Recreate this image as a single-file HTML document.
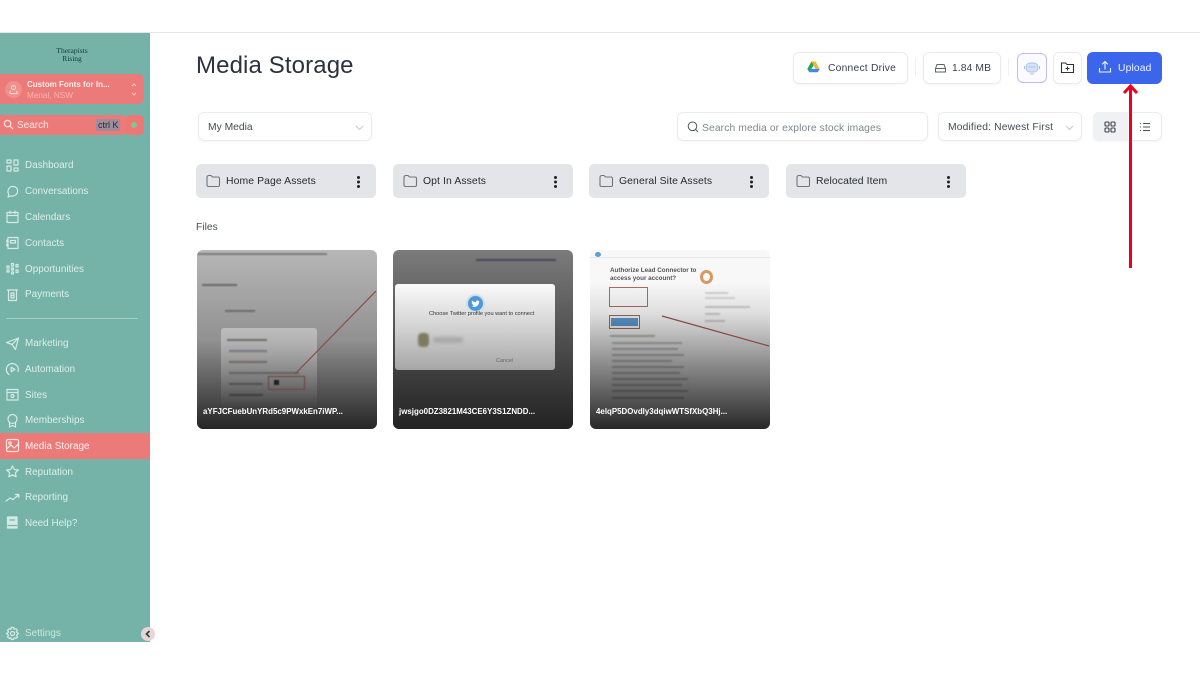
<!DOCTYPE html>
<html><head><meta charset="utf-8">
<style>
html,body{margin:0;padding:0;background:#fff}
body{width:1200px;height:675px;position:relative;overflow:hidden;font-family:"Liberation Sans",sans-serif}
body>*{filter:blur(.35px)}
.a{position:absolute}
.t{position:absolute;white-space:nowrap;line-height:14px;margin-top:1px}
.nav{position:absolute;left:25px;font-size:9.900px;line-height:14px;margin-top:1px;color:#dceee9;white-space:nowrap;letter-spacing:.02px}
.ic{position:absolute;left:5px;width:15px;height:15px;fill:none;stroke:#d6eae5;stroke-width:1.200;stroke-linecap:round;stroke-linejoin:round}
.btn{position:absolute;background:#fff;border:1px solid #e9ebee;border-radius:6px;box-sizing:border-box;box-shadow:0 1px 2px rgba(16,24,40,.04)}
.folder{position:absolute;top:164px;width:179.500px;height:34px;background:#e3e5e8;border-radius:5px}
.folder span{position:absolute;left:30px;top:11px;font-size:10.400px;line-height:14px;color:#262b33;white-space:nowrap;letter-spacing:.1px}
.folder svg.f{position:absolute;left:9px;top:9px;width:16px;height:16px;fill:none;stroke:#70767f;stroke-width:1.100}
.folder i{position:absolute;left:161px;top:11.500px;width:3px;height:3px;background:#1f2329;border-radius:50%;box-shadow:0 4.500px 0 #1f2329,0 9px 0 #1f2329}
.card{position:absolute;top:250px;width:180px;height:179px;border-radius:6px;overflow:hidden}
.card .g{position:absolute;inset:0;background:linear-gradient(to bottom,rgba(0,0,0,.12) 0%,rgba(0,0,0,.3) 50%,rgba(0,0,0,.82) 100%)}
.card b{position:absolute;left:6px;top:156px;font-size:7.900px;line-height:12px;color:#fff;white-space:nowrap;font-weight:700;letter-spacing:.02px}
.bar{position:absolute;background:#aaa;height:1.500px;filter:blur(.8px);opacity:.75}
</style></head><body>

<div class="a" style="left:0;top:32px;width:1200px;height:1px;background:#e6e6e6"></div>

<!-- Sidebar -->
<div class="a" style="left:0;top:33px;width:150px;height:609px;background:#75b3a8"></div>
<div class="t" style="left:52px;top:46px;width:40px;text-align:center;font-family:'Liberation Serif',serif;font-size:7.500px;line-height:8px;color:#17393a">Therapists<br>Rising</div>

<div class="a" style="left:0;top:74px;width:144px;height:30px;background:#ec7a78;border-radius:0 6px 6px 0"></div>
<div class="a" style="left:5px;top:81px;width:17px;height:17px;border-radius:50%;background:#f08f8c"></div>
<svg class="a" style="left:8px;top:84px;width:11px;height:11px" viewBox="0 0 12 12" fill="none" stroke="#fbe3e0" stroke-width="1"><circle cx="6" cy="4" r="2.200"/><path d="M3 7.500C1.500 8.500 1.500 10.500 3 10.500H9C10.500 10.500 10.500 8.500 9 7.500"/></svg>
<div class="t" style="left:27px;top:78px;margin-top:0;font-size:8px;line-height:14px;font-weight:700;color:#fdeeec">Custom Fonts for In...</div>
<div class="t" style="left:27px;top:89px;margin-top:0;font-size:8.200px;line-height:14px;color:#f6b7b3">Menal, NSW</div>
<svg class="a" style="left:130px;top:82px;width:8px;height:15px" viewBox="0 0 8 15" fill="none" stroke="#f8cfcc" stroke-width="1"><path d="M2 4L4 2L6 4M2 11L4 13L6 11"/></svg>

<div class="a" style="left:0;top:115px;width:127px;height:20px;background:#ec7a78;border-radius:0 5px 5px 0"></div>
<div class="a" style="left:125px;top:115px;width:19px;height:20px;background:#ee7775;border-radius:5px"></div>
<div class="a" style="left:131px;top:122px;width:6px;height:6px;border-radius:50%;background:#7fc78c"></div>
<svg class="a" style="left:3px;top:119px;width:11px;height:11px" viewBox="0 0 11 11" fill="none" stroke="#fde8e6" stroke-width="1.200"><circle cx="4.600" cy="4.600" r="3.200"/><path d="M7 7L10 10"/></svg>
<div class="t" style="left:17px;top:118px;font-size:10px;color:#fde8e6">Search</div>
<div class="a" style="left:96px;top:119px;width:24px;height:12px;background:#a08c9b;border-radius:2px"></div>
<div class="t" style="left:98px;top:117px;font-size:9px;color:#1c2838">ctrl K</div>

<svg class="ic" style="top:158px" viewBox="0 0 15 15"><path d="M2 2H6V5H2ZM9 2H13V7H9ZM2 8H6V13H2ZM9 10H13V13H9Z"/></svg>
<div class="nav" style="top:158px">Dashboard</div>
<svg class="ic" style="top:184px" viewBox="0 0 15 15"><path d="M3 13L3.800 10.500C1.500 6.500 4.500 2 8.500 2.500C13.500 3 14 9.500 9.500 11.500C8 12.300 6.500 12.200 5.500 12Z"/></svg>
<div class="nav" style="top:184px">Conversations</div>
<svg class="ic" style="top:209px" viewBox="0 0 15 15"><path d="M2 3.500H13V13.500H2ZM2 6.500H13M5 2V4.500M10 2V4.500"/></svg>
<div class="nav" style="top:210px">Calendars</div>
<svg class="ic" style="top:235px" viewBox="0 0 15 15"><path d="M3 2.500H13V13.500H3ZM5.500 5.500H10.500V8H5.500ZM1.800 5V7M1.800 9V11"/></svg>
<div class="nav" style="top:236px">Contacts</div>
<svg class="ic" style="top:261px" viewBox="0 0 15 15"><path d="M2 5H4V7H2ZM2 9H4V11H2ZM6.500 2.500H8.500V5H6.500ZM6.500 7H8.500V9H6.500ZM6.500 11H8.500V13H6.500ZM11 3.500H13V6H11ZM11 9H13V11.500H11Z"/></svg>
<div class="nav" style="top:262px">Opportunities</div>
<svg class="ic" style="top:287px" viewBox="0 0 15 15"><path d="M2.500 3H12.500M3.500 3V13.500H11.500V3M6 6H9V11H6ZM6 8.500H9"/></svg>
<div class="nav" style="top:287px">Payments</div>

<div class="a" style="left:6px;top:318px;width:132px;height:1px;background:#a4cdc4"></div>

<svg class="ic" style="top:336px" viewBox="0 0 15 15"><path d="M1.500 6.500L13.500 2L10.500 13.500L7 8.500ZM7 8.500L13.500 2"/></svg>
<div class="nav" style="top:336px">Marketing</div>
<svg class="ic" style="top:362px" viewBox="0 0 15 15"><path d="M4 12.500A6 6 0 1 1 13 9.500M6.200 5.300L10 7.500L6.200 9.700Z"/></svg>
<div class="nav" style="top:362px">Automation</div>
<svg class="ic" style="top:387px" viewBox="0 0 15 15"><path d="M2 2.500H13V13H2ZM2 5.500H13"/><circle cx="7.500" cy="9" r="1.500"/></svg>
<div class="nav" style="top:388px">Sites</div>
<svg class="ic" style="top:413px" viewBox="0 0 15 15"><circle cx="7.500" cy="6" r="4.500"/><path d="M4.500 10V14L7.500 12.500L10.500 14V10"/></svg>
<div class="nav" style="top:413px">Memberships</div>

<div class="a" style="left:0;top:433px;width:150px;height:26px;background:#ec7a78"></div>
<svg class="ic" style="top:438px;stroke:#fde8e6" viewBox="0 0 15 15"><rect x="1.500" y="1.500" width="12" height="12" rx="1.500"/><circle cx="5" cy="5" r="1.200"/><path d="M1.500 11L6 7L9 10L13.500 6"/></svg>
<div class="nav" style="top:439px;color:#fff3f2">Media Storage</div>

<svg class="ic" style="top:464px" viewBox="0 0 15 15"><path d="M7.500 2L9.300 5.500L13.300 6L10.400 8.700L11.100 12.800L7.500 10.800L3.900 12.800L4.600 8.700L1.700 6L5.700 5.500Z"/></svg>
<div class="nav" style="top:465px">Reputation</div>
<svg class="ic" style="top:490px" viewBox="0 0 15 15"><path d="M1 11L5 8L8 9.500L13.500 5M10.500 4.500H13.800V7.500"/></svg>
<div class="nav" style="top:490px">Reporting</div>
<svg class="ic" style="top:515px;fill:#d6eae5" viewBox="0 0 15 15"><path d="M2.500 2H12V13H2.500Z"/><path d="M5 5H9.500M3 10.500H11.500" stroke="#75b3a8"/></svg>
<div class="nav" style="top:516px">Need Help?</div>

<svg class="ic" style="top:626px" viewBox="0 0 15 15"><circle cx="7.500" cy="7.500" r="2"/><path d="M6.300 1.500H8.700L9.200 3.300L11 2.700L12.500 4.500L11.300 6L13.500 7.500L11.500 9.200L12.500 11L10.800 12.400L9.200 11.700L8.700 13.500H6.300L5.800 11.700L4.200 12.400L2.500 11L3.500 9.200L1.500 7.500L3.700 6L2.500 4.500L4 2.700L5.800 3.300Z"/></svg>
<div class="nav" style="top:626px;color:#cfe6e0">Settings</div>
<div class="a" style="left:141px;top:627px;width:14px;height:14px;border-radius:50%;background:#e9d3d6"></div>
<svg class="a" style="left:144px;top:630px;width:8px;height:8px" viewBox="0 0 8 8" fill="none" stroke="#1f4a46" stroke-width="1.700"><path d="M5.500 1L2.500 4L5.500 7"/></svg>

<!-- Header -->
<div class="t" style="left:196px;top:50px;font-size:24px;line-height:30px;color:#2c323c;letter-spacing:.12px">Media Storage</div>

<div class="btn" style="left:793px;top:52px;width:115px;height:32px"></div>
<svg class="a" style="left:807px;top:61px;width:13px;height:12px" viewBox="0 0 13 12"><path d="M4.500 0.500H8.500L6.500 4.500L4.200 0.900Z" fill="#f4b400"/><path d="M4.500 0.500L0.300 8L2.300 11.300L6.500 4.500Z" fill="#1fa463"/><path d="M8.500 0.500L12.700 8H8.500L6.500 4.500Z" fill="#e8b93a"/><path d="M2.300 11.300H10.700L12.700 8H4.300Z" fill="#4285f4"/></svg>
<div class="t" style="left:828px;top:61px;font-size:10.300px;color:#3a404a;letter-spacing:.22px">Connect Drive</div>
<div class="a" style="left:915px;top:58px;width:1px;height:18px;background:#eceef0"></div>

<div class="btn" style="left:923px;top:52px;width:78px;height:32px"></div>
<svg class="a" style="left:934px;top:62px;width:13px;height:12px" viewBox="0 0 13 12" fill="none" stroke="#5c626c" stroke-width="1"><path d="M1.500 6.500L3 2.500H10L11.500 6.500V10H1.500ZM1.500 6.500H11.500"/></svg>
<div class="t" style="left:952px;top:61px;font-size:10.300px;color:#3a404a;letter-spacing:.1px">1.84 MB</div>
<div class="a" style="left:1008px;top:58px;width:1px;height:18px;background:#f0f1f3"></div>

<div class="a" style="left:1017px;top:53px;width:30px;height:30px;box-sizing:border-box;border:1.500px solid #c2bdee;border-radius:6px;background:#fbfbff"></div>
<svg class="a" style="left:1023px;top:59px;width:18px;height:18px" viewBox="0 0 18 18" fill="#d5e2f8" stroke="#a9c4ee" stroke-width="1"><rect x="3" y="4" width="12" height="9" rx="4"/><path d="M5.500 8H12.500M7 15H11M1.500 7V10M16.500 7V10" fill="none"/></svg>

<div class="btn" style="left:1053px;top:52px;width:29px;height:32px"></div>
<svg class="a" style="left:1060px;top:60px;width:15px;height:15px" viewBox="0 0 15 15" fill="none" stroke="#2c323c" stroke-width="1.100"><path d="M1.500 3H5.500L7 4.500H13.500V12.500H1.500ZM7.500 6.500V10.500M5.500 8.500H9.500"/></svg>

<div class="a" style="left:1087px;top:52px;width:75px;height:32px;background:#3b66ec;border-radius:6px"></div>
<svg class="a" style="left:1098px;top:60px;width:14px;height:14px" viewBox="0 0 14 14" fill="none" stroke="#f2f5ff" stroke-width="1.100"><path d="M1.500 8V12H12.500V8M7 9.500V1.500M4.200 4.300L7 1.500L9.800 4.300"/></svg>
<div class="t" style="left:1118px;top:61px;font-size:10.300px;color:#eef2ff;letter-spacing:.15px">Upload</div>

<!-- Filters row -->
<div class="btn" style="left:198px;top:112px;width:174px;height:29px"></div>
<div class="t" style="left:208px;top:120px;font-size:10.300px;color:#454b54">My Media</div>
<svg class="a" style="left:355px;top:125px;width:9px;height:6px" viewBox="0 0 9 6" fill="none" stroke="#c5c9ce"><path d="M1 1L4.500 4.500L8 1"/></svg>

<div class="btn" style="left:677px;top:112px;width:251px;height:29px"></div>
<svg class="a" style="left:687px;top:121px;width:12px;height:12px" viewBox="0 0 12 12" fill="none" stroke="#50565f" stroke-width="1"><circle cx="5.500" cy="5.300" r="4.300"/><path d="M8.600 8.500L10.800 10.800"/></svg>
<div class="t" style="left:702px;top:121px;font-size:10.300px;color:#80868f;letter-spacing:.11px">Search media or explore stock images</div>

<div class="btn" style="left:938px;top:112px;width:144px;height:29px"></div>
<div class="t" style="left:948px;top:120px;font-size:10.300px;color:#454b54;letter-spacing:.15px">Modified: Newest First</div>
<svg class="a" style="left:1065px;top:125px;width:9px;height:6px" viewBox="0 0 9 6" fill="none" stroke="#c5c9ce"><path d="M1 1L4.500 4.500L8 1"/></svg>

<div class="btn" style="left:1093px;top:112px;width:69px;height:29px"></div>
<div class="a" style="left:1093px;top:112px;width:35px;height:29px;background:#f0f1f3;border-radius:6px 0 0 6px"></div>
<svg class="a" style="left:1104px;top:121px;width:12px;height:12px" viewBox="0 0 12 12" fill="none" stroke="#3c424c" stroke-width="1.100"><rect x="1" y="1" width="4" height="4" rx="1"/><rect x="7" y="1" width="4" height="4" rx="1"/><rect x="1" y="7" width="4" height="4" rx="1"/><rect x="7" y="7" width="4" height="4" rx="1"/></svg>
<svg class="a" style="left:1139px;top:121px;width:12px;height:12px" viewBox="0 0 12 12" fill="none" stroke="#4c525c" stroke-width="1.100"><path d="M4 2.500H11M4 6H11M4 9.500H11M1 2.500H2M1 6H2M1 9.500H2"/></svg>

<!-- Folders -->
<div class="folder" style="left:196px"><svg class="f" viewBox="0 0 16 16"><path d="M2 4.500Q2 2.500 4 2.500H6L7.500 4H13Q14.500 4 14.500 5.500V12Q14.500 13.500 13 13.500H3.500Q2 13.500 2 12Z"/></svg><span>Home Page Assets</span><i></i></div>
<div class="folder" style="left:393px"><svg class="f" viewBox="0 0 16 16"><path d="M2 4.500Q2 2.500 4 2.500H6L7.500 4H13Q14.500 4 14.500 5.500V12Q14.500 13.500 13 13.500H3.500Q2 13.500 2 12Z"/></svg><span>Opt In Assets</span><i></i></div>
<div class="folder" style="left:589px"><svg class="f" viewBox="0 0 16 16"><path d="M2 4.500Q2 2.500 4 2.500H6L7.500 4H13Q14.500 4 14.500 5.500V12Q14.500 13.500 13 13.500H3.500Q2 13.500 2 12Z"/></svg><span>General Site Assets</span><i></i></div>
<div class="folder" style="left:786px"><svg class="f" viewBox="0 0 16 16"><path d="M2 4.500Q2 2.500 4 2.500H6L7.500 4H13Q14.500 4 14.500 5.500V12Q14.500 13.500 13 13.500H3.500Q2 13.500 2 12Z"/></svg><span>Relocated Item</span><i></i></div>

<div class="t" style="left:196px;top:220px;font-size:10.300px;color:#4c525b">Files</div>

<!-- Card 1 -->
<div class="card" style="left:197px;background:#d0d0d0">
  <div class="bar" style="left:0;top:3px;width:130px;background:#777"></div>
  <div class="bar" style="left:5px;top:34px;width:35px;background:#666"></div>
  <div class="bar" style="left:28px;top:60px;width:30px;background:#777"></div>
  <div class="g"></div>
  <div class="a" style="left:24px;top:78px;width:96px;height:80px;background:linear-gradient(to bottom,#d6d6d6,rgba(214,214,214,0));opacity:.6;border-radius:3px"></div>
  <div class="bar" style="left:30px;top:89px;width:40px;background:#555"></div>
  <div class="bar" style="left:32px;top:100px;width:38px;background:#667"></div>
  <div class="bar" style="left:32px;top:111px;width:38px;background:#655"></div>
  <div class="bar" style="left:32px;top:122px;width:70px;background:#555"></div>
  <div class="bar" style="left:32px;top:133px;width:34px;background:#444"></div>
  <div class="bar" style="left:32px;top:144px;width:34px;background:#333"></div>
  <div class="a" style="left:71px;top:126px;width:37px;height:14px;box-sizing:border-box;border:1px solid #70423a;filter:blur(.4px)"></div>
  <div class="a" style="left:77px;top:130px;width:5px;height:5px;background:#222;filter:blur(.4px)"></div>
  <svg class="a" style="left:0;top:0;width:180px;height:179px" viewBox="0 0 180 179"><path d="M179 41L98 124" stroke="#8a4a40" stroke-width="1.200" fill="none"/></svg>
  <b>aYFJCFuebUnYRd5c9PWxkEn7iWP...</b>
</div>

<!-- Card 2 -->
<div class="card" style="left:393px;background:#bdbdbd">
  <div class="bar" style="left:83px;top:9px;width:80px;background:#4c5a86"></div>
  <div class="a" style="inset:0;background:linear-gradient(to bottom,rgba(0,0,0,.35),rgba(0,0,0,.82))"></div>
  <div class="a" style="left:2px;top:34px;width:160px;height:86px;border-radius:3px;background:linear-gradient(to bottom,#fafafa,#cfcfcf 55%,#a6a6a6)"></div>
  <div class="a" style="left:75px;top:46px;width:15px;height:15px;border-radius:50%;background:#4a9ad8;box-shadow:0 0 0 2px #d5dde6"></div>
  <svg class="a" style="left:78px;top:50px;width:9px;height:8px" viewBox="0 0 9 8"><path d="M0.500 6.500C4 8 8 6 8 2L8.800 1L7.800 1.200C7 0 5 0.300 4.800 2.200C3.300 2.100 2 1.500 1 0.500C0.500 1.500 0.800 2.500 1.500 3L0.800 3C1 4 1.500 4.500 2.300 4.800L1.600 4.900C1.900 5.500 2.500 5.800 3 5.900C2.300 6.400 1.400 6.600 0.500 6.500Z" fill="#fff"/></svg>
  <div class="t" style="left:36px;top:58px;font-size:5.600px;line-height:10px;color:#333;filter:blur(.3px)">Choose Twitter profile you want to connect</div>
  <div class="a" style="left:25px;top:83px;width:11px;height:14px;border-radius:4px;background:#7e7a60;filter:blur(1px)"></div>
  <div class="a" style="left:40px;top:87px;width:30px;height:6px;background:#a9a9a9;filter:blur(1.500px)"></div>
  <div class="t" style="left:103px;top:105px;font-size:5.500px;line-height:10px;color:#666;filter:blur(.3px)">Cancel</div>
  <b>jwsjgo0DZ3821M43CE6Y3S1ZNDD...</b>
</div>

<!-- Card 3 -->
<div class="card" style="left:590px;background:#f8f8f8">
  <div class="a" style="left:0;top:7px;width:180px;height:1px;background:#e8e8e8"></div>
  <div class="a" style="left:5px;top:2px;width:6px;height:5px;background:#5b9fd8;border-radius:50%"></div>
  <div class="t" style="left:20px;top:16px;font-size:6.300px;line-height:8px;font-weight:700;color:#555;filter:blur(.2px)">Authorize Lead Connector to<br>access your account?</div>
  <div class="a" style="left:19px;top:37px;width:39px;height:20px;box-sizing:border-box;border:1px solid #b06a60"></div>
  <div class="a" style="left:19px;top:65px;width:31px;height:14px;box-sizing:border-box;border:1px solid #a06a60"></div>
  <div class="a" style="left:21px;top:68px;width:27px;height:8px;background:#5c9bd0"></div>
  <div class="a" style="left:110px;top:20px;width:13px;height:14px;border:3px solid #d89a60;box-sizing:border-box;border-radius:50%"></div>
  <div class="bar" style="left:115px;top:42px;width:23px;background:#c5c5c5"></div>
  <div class="bar" style="left:115px;top:47px;width:30px;background:#ccc"></div>
  <div class="bar" style="left:115px;top:56px;width:45px;background:#bbb"></div>
  <div class="bar" style="left:115px;top:63px;width:15px;background:#bbb"></div>
  <div class="bar" style="left:115px;top:70px;width:20px;background:#bbb"></div>
  <div class="bar" style="left:20px;top:85px;width:45px;background:#9a9"></div>
  <div class="bar" style="left:22px;top:92px;width:70px"></div>
  <div class="bar" style="left:22px;top:98px;width:66px"></div>
  <div class="bar" style="left:22px;top:104px;width:72px"></div>
  <div class="bar" style="left:22px;top:110px;width:60px"></div>
  <div class="bar" style="left:22px;top:116px;width:72px"></div>
  <div class="bar" style="left:22px;top:122px;width:68px"></div>
  <div class="bar" style="left:22px;top:128px;width:76px"></div>
  <div class="bar" style="left:22px;top:134px;width:70px"></div>
  <div class="bar" style="left:22px;top:140px;width:76px"></div>
  <div class="bar" style="left:22px;top:147px;width:72px"></div>
  <div class="a" style="inset:0;background:linear-gradient(to bottom,rgba(0,0,0,0) 18%,rgba(0,0,0,.1) 35%,rgba(0,0,0,.45) 65%,rgba(0,0,0,.84) 100%)"></div>
  <svg class="a" style="left:0;top:0;width:180px;height:179px" viewBox="0 0 180 179"><path d="M179 96L72 66" stroke="#8a4a40" stroke-width="1.200" fill="none"/></svg>
  <b>4elqP5DOvdly3dqiwWTSfXbQ3Hj...</b>
</div>

<!-- Red arrow -->
<svg class="a" style="left:1120px;top:83px;width:22px;height:187px;filter:none" viewBox="0 0 22 187" fill="none" stroke="#ee0020" stroke-width="3"><path d="M10.500 185V3M4 10L10.500 3L17 10"/></svg>

</body></html>
